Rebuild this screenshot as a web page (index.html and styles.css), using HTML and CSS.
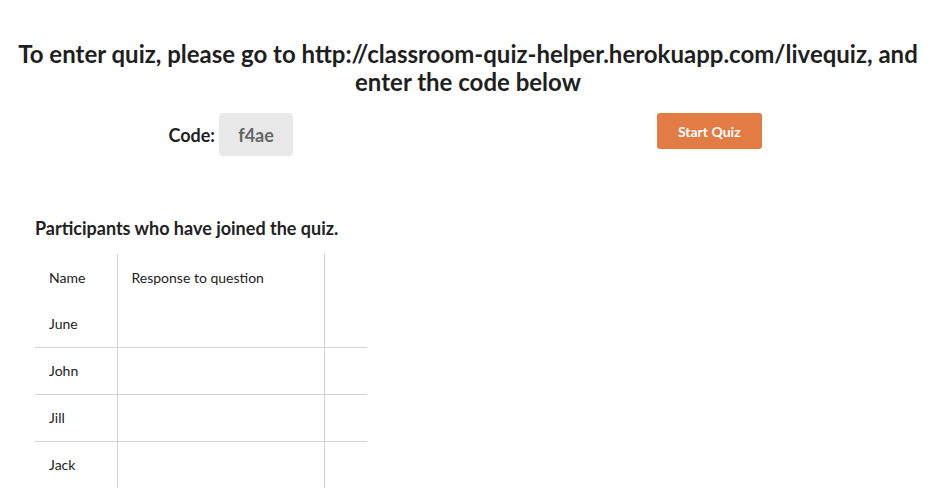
FILE: index.html
```html
<!DOCTYPE html>
<html>
<head>
<meta charset="utf-8">
<link rel="stylesheet" href="styles.css">
</head>
<body>
<div class="page">
  <h1 class="title">To enter quiz, please go to http://classroom-quiz-helper.herokuapp.com/livequiz, and enter the code below</h1>
  <div class="controls">
    <div class="half code-half">
      <span class="code-label">Code:</span>
      <span class="code-box">f4ae</span>
    </div>
    <div class="half btn-half">
      <button class="start-btn">Start Quiz</button>
    </div>
  </div>
  <h2 class="subtitle">Participants who have joined the quiz.</h2>
  <table class="participants">
    <tr class="head"><td class="c-name">Name</td><td class="c-resp">Response to question</td><td class="c-extra"></td></tr>
    <tr class="first"><td class="c-name">June</td><td class="c-resp"></td><td class="c-extra"></td></tr>
    <tr><td class="c-name">John</td><td class="c-resp"></td><td class="c-extra"></td></tr>
    <tr><td class="c-name">Jill</td><td class="c-resp"></td><td class="c-extra"></td></tr>
    <tr><td class="c-name">Jack</td><td class="c-resp"></td><td class="c-extra"></td></tr>
  </table>
</div>
</body>
</html>
```

FILE: styles.css
```css
html, body {
  margin: 0;
  padding: 0;
  background: #fff;
}
body {
  font-family: Lato, "Open Sans", sans-serif;
  color: #222;
}
.page {
  padding-top: 40px;
}
.title {
  margin: 0;
  font-size: 24px;
  font-weight: 700;
  line-height: 28px;
  text-align: center;
  padding: 0 10px;
  color: #1f1f1f;
}
.controls {
  display: flex;
  margin-top: 17px;
}
.half {
  flex: 1;
  display: flex;
  justify-content: center;
  align-items: flex-start;
}
.code-half {
  align-items: center;
  gap: 4px;
  height: 43px;
  padding-left: 4px;
}
.code-label {
  font-size: 18px;
  font-weight: 700;
  color: #222;
}
.code-box {
  display: inline-flex;
  align-items: center;
  justify-content: center;
  width: 74px;
  height: 43px;
  background: #e8e8e8;
  border-radius: 4px;
  font-size: 18px;
  font-weight: 700;
  color: #666;
}
.btn-half {
  padding-left: 25px;
}
.start-btn {
  width: 105px;
  height: 36px;
  background: #e27c44;
  border: none;
  border-radius: 3px;
  color: #fff;
  font-family: Lato, sans-serif;
  font-weight: 700;
  font-size: 14px;
  padding: 0;
}
.subtitle {
  margin: 61px 0 0 35px;
  font-size: 18px;
  font-weight: 700;
  color: #222;
  line-height: 22px;
}
.participants {
  margin: 15px 0 0 35px;
  border-collapse: collapse;
  font-size: 14px;
  color: #222;
}
.participants td {
  height: 47px;
  padding: 0 14px;
  vertical-align: middle;
  border-top: 1px solid #d4d4d4;
  box-sizing: border-box;
}
.participants tr.head td,
.participants tr.first td {
  border-top: none;
}
.participants tr.first td {
  height: 46px;
}
.c-name {
  width: 82px;
  border-right: 1px solid #d4d4d4;
}
.c-resp {
  width: 207px;
  border-right: 1px solid #d4d4d4;
}
.c-extra {
  width: 43px;
  padding: 0 !important;
}
```
